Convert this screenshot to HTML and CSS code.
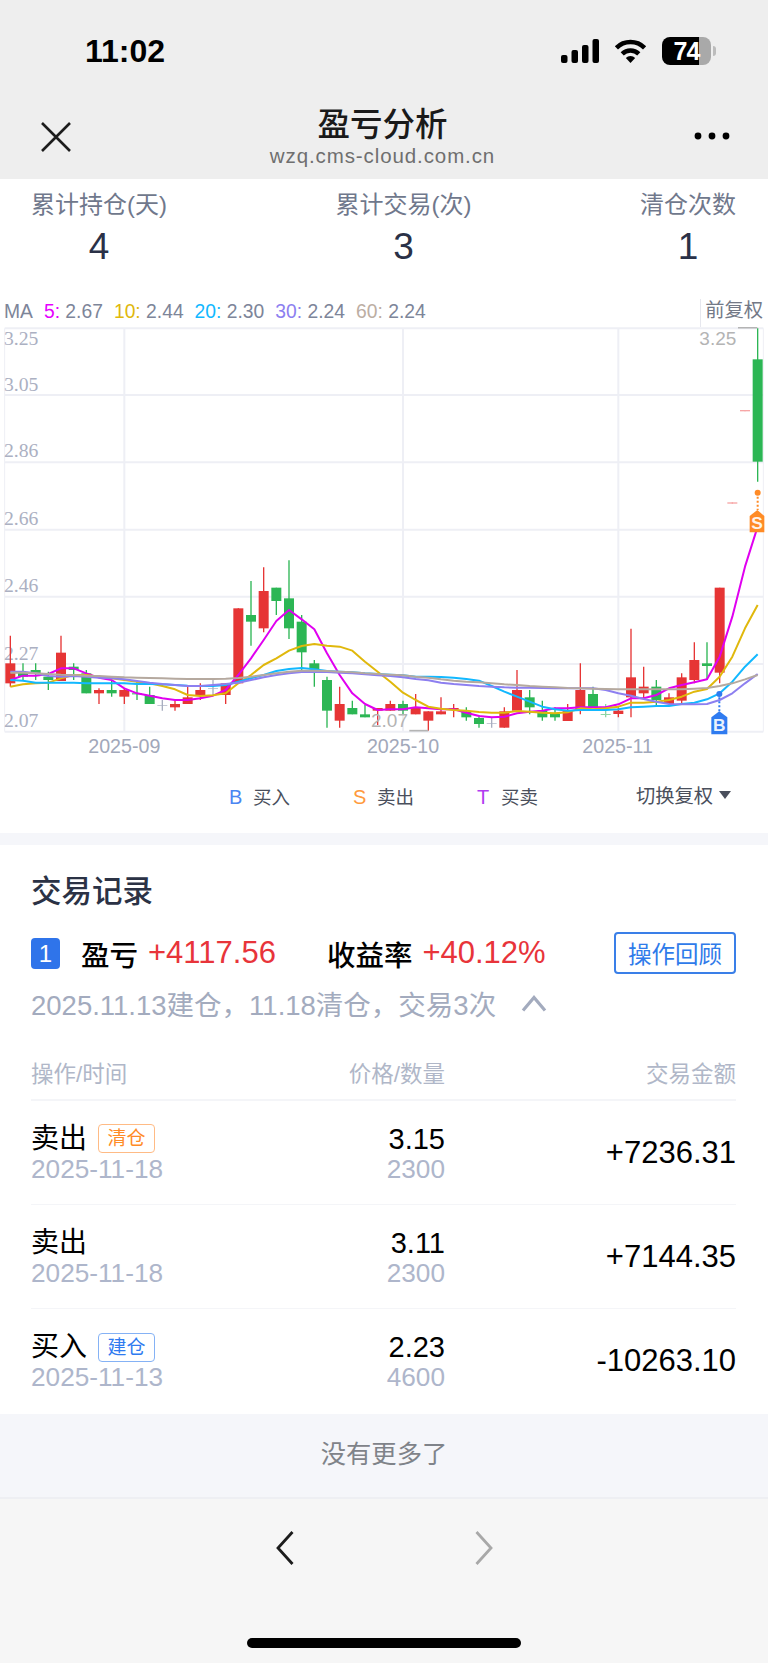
FILE: index.html
```html
<!DOCTYPE html>
<html>
<head>
    <title>盈亏分析</title>
    <meta charset="utf-8">
    <link rel="stylesheet" href="styles.css">
</head>
<body>
    <header class="top">
        <div class="status">
            <span class="time">11:02</span>
            <div class="status-icons">
                <svg class="signal" width="38" height="24" viewBox="0 0 38 24">
                    <rect x="0" y="16" width="6.5" height="8" rx="2"/>
                    <rect x="10.5" y="11" width="6.5" height="13" rx="2"/>
                    <rect x="21" y="6" width="6.5" height="18" rx="2"/>
                    <rect x="31.5" y="0" width="6.5" height="24" rx="2"/>
                </svg>
                <svg class="wifi" width="33" height="24" viewBox="0 0 33 24">
                    <path d="M2.4 8.9A20 20 0 0 1 30.6 8.9M8.2 14.8A12 12 0 0 1 24.8 14.8" fill="none" stroke="#000" stroke-width="4.5"/>
                    <path d="M16.5 24L11.8 19A6.6 6.6 0 0 1 21.2 19Z"/>
                </svg>
                <div class="battery">74</div>
            </div>
        </div>
        <div class="nav">
            <svg width="30" height="30" viewBox="0 0 30 30">
                <path d="M1 1L29 29M29 1L1 29" stroke="#1c1c1c" stroke-width="2.6" fill="none"/>
            </svg>
            <div class="nav-title">
                <h1>盈亏分析</h1>
                <div class="nav-url">wzq.cms-cloud.com.cn</div>
            </div>
            <svg width="36" height="8" viewBox="0 0 36 8">
                <circle cx="4" cy="4" r="3.4"/>
                <circle cx="18" cy="4" r="3.4"/>
                <circle cx="32" cy="4" r="3.4"/>
            </svg>
        </div>
    </header>

    <section class="stats">
        <div class="stat"><div class="stat-label">累计持仓(天)</div><div class="stat-value">4</div></div>
        <div class="stat"><div class="stat-label">累计交易(次)</div><div class="stat-value">3</div></div>
        <div class="stat"><div class="stat-label">清仓次数</div><div class="stat-value">1</div></div>
    </section>

    <div class="ma-row">
        <span class="ma-name">MA</span>
        <span class="ma-item"><b class="c5">5:</b> 2.67</span>
        <span class="ma-item"><b class="c10">10:</b> 2.44</span>
        <span class="ma-item"><b class="c20">20:</b> 2.30</span>
        <span class="ma-item"><b class="c30">30:</b> 2.24</span>
        <span class="ma-item"><b class="c60">60:</b> 2.24</span>
        <span class="fq">前复权</span>
    </div>

    <svg id="chart" class="chart" width="768" height="433" viewBox="0 81 2304 1299">
        <g id="grid"></g>
        <g class="y-labels">
            <text x="12" y="135">3.25</text>
            <text x="12" y="272">3.05</text>
            <text x="12" y="472">2.86</text>
            <text x="12" y="675">2.66</text>
            <text x="12" y="877">2.46</text>
            <text x="12" y="1080">2.27</text>
            <text x="12" y="1282">2.07</text>
        </g>
        <g id="candles"></g>
        <g id="lines"></g>
        <g class="x-labels">
            <text x="373" y="1358">2025-09</text>
            <text x="1209" y="1358">2025-10</text>
            <text x="1853" y="1358">2025-11</text>
        </g>
        <g class="extreme">
            <text x="2098" y="135">3.25</text>
            <path d="M2214 83H2272"/>
            <text x="1113" y="1282">2.07</text>
            <path d="M1228 1292H1285"/>
        </g>
        <g class="pin-b">
            <circle cx="2158" cy="1182" r="9"/>
            <path class="pin-dots" d="M2158 1192V1236"/>
            <path d="M2158 1234L2182 1252V1303H2134V1252Z"/>
            <text x="2158" y="1292">B</text>
        </g>
        <g class="pin-s">
            <circle cx="2273" cy="578" r="9"/>
            <path class="pin-dots" d="M2273 590V630"/>
            <path d="M2272 630L2293 648V697H2249V648Z"/>
            <text x="2271" y="686">S</text>
        </g>
    </svg>

    <div class="marks">
        <span class="mark"><i class="m-b">B</i>买入</span>
        <span class="mark"><i class="m-s">S</i>卖出</span>
        <span class="mark"><i class="m-t">T</i>买卖</span>
        <span class="switch">切换复权<em></em></span>
    </div>

    <div class="band"></div>

    <section class="records">
        <h2>交易记录</h2>
        <div class="summary">
            <span class="num-badge">1</span>
            <span class="sum-name">盈亏</span>
            <span class="sum-val">+4117.56</span>
            <span class="sum-name rate">收益率</span>
            <span class="sum-val">+40.12%</span>
            <button class="review">操作回顾</button>
        </div>
        <div class="sub">
            <span>2025.11.13建仓，11.18清仓，交易3次</span>
            <svg width="26" height="17" viewBox="0 0 26 17">
                <path d="M2 15.5L13 2.5L24 15.5" fill="none" stroke="#a3abbe" stroke-width="3.2"/>
            </svg>
        </div>

        <div class="row head">
            <div>操作/时间</div>
            <div class="right">价格/数量</div>
            <div class="right">交易金额</div>
        </div>
        <div class="row">
            <div>
                <div class="op">卖出<span class="tag orange">清仓</span></div>
                <div class="minor">2025-11-18</div>
            </div>
            <div class="right">
                <div class="price">3.15</div>
                <div class="minor">2300</div>
            </div>
            <div class="right amount">+7236.31</div>
        </div>
        <div class="row">
            <div>
                <div class="op">卖出</div>
                <div class="minor">2025-11-18</div>
            </div>
            <div class="right">
                <div class="price">3.11</div>
                <div class="minor">2300</div>
            </div>
            <div class="right amount">+7144.35</div>
        </div>
        <div class="row last">
            <div>
                <div class="op">买入<span class="tag blue">建仓</span></div>
                <div class="minor">2025-11-13</div>
            </div>
            <div class="right">
                <div class="price">2.23</div>
                <div class="minor">4600</div>
            </div>
            <div class="right amount">-10263.10</div>
        </div>
    </section>

    <div class="no-more">没有更多了</div>

    <footer class="toolbar">
        <div class="arrows">
            <svg width="18" height="34" viewBox="0 0 18 34">
                <path d="M16.5 1L2 17L16.5 33" fill="none" stroke="#1c1c1c" stroke-width="2.8"/>
            </svg>
            <svg width="18" height="34" viewBox="0 0 18 34">
                <path d="M1.5 1L16 17L1.5 33" fill="none" stroke="#a8a8a8" stroke-width="2.8"/>
            </svg>
        </div>
        <div class="home-bar"></div>
    </footer>

    <script src="chart.js"></script>
</body>
</html>
```

FILE: styles.css
```css
* {
    box-sizing: border-box;
}

body {
    margin: 0;
    width: 768px;
    height: 1663px;
    overflow: hidden;
    background: #fff;
    font-family: "Liberation Sans", "Noto Sans CJK SC", sans-serif;
    color: #000;
}

h1, h2 {
    margin: 0;
    font-weight: 500;
}

/* top bar */
.top {
    height: 179px;
    background: #eeeeee;
}

.status {
    height: 100px;
    padding: 37px 57px 0 85px;
    display: flex;
    justify-content: space-between;
    align-items: flex-start;
}

.time {
    font-size: 32px;
    line-height: 28px;
    font-weight: 700;
}

.status-icons {
    display: flex;
    align-items: center;
    height: 28px;
    gap: 15px;
}

.battery {
    position: relative;
    width: 49px;
    height: 28px;
    border-radius: 8px;
    background: linear-gradient(90deg, #000 76%, #a9a9a9 76%);
    color: #fff;
    font-size: 25px;
    line-height: 28px;
    font-weight: 700;
    text-align: center;
    letter-spacing: -1px;
}

.battery::after {
    content: "";
    position: absolute;
    right: -5px;
    top: 9px;
    width: 3px;
    height: 10px;
    border-radius: 0 3px 3px 0;
    background: #bcbcbc;
}

.nav {
    height: 79px;
    padding: 0 38px 0 41px;
    display: flex;
    justify-content: space-between;
    align-items: center;
}

.nav svg:first-child {
    margin-top: -6px;
}

.nav svg:last-child {
    margin-top: -8px;
}

.nav-title {
    text-align: center;
    margin-top: -6px;
}

.nav-title h1 {
    font-size: 32.5px;
    line-height: 38px;
    color: #1a1a1a;
}

.nav-url {
    font-size: 20.5px;
    line-height: 24px;
    color: #6f6f6f;
    letter-spacing: 0.9px;
}

/* stats */
.stats {
    height: 120px;
    padding: 11px 32px 0 31px;
    display: flex;
    justify-content: space-between;
}

.stat {
    text-align: center;
}

.stat-label {
    font-size: 24px;
    line-height: 30px;
    color: #70788c;
}

.stat-value {
    margin-top: 6px;
    font-size: 37px;
    line-height: 42px;
    color: #2a3147;
}

/* MA legend */
.ma-row {
    height: 28px;
    padding: 0 0 3px 4px;
    display: flex;
    align-items: center;
    font-size: 19.3px;
    color: #7d8599;
}

.ma-name {
    margin-right: 11px;
}

.ma-item {
    margin-right: 11px;
    white-space: nowrap;
}

.ma-item b {
    font-weight: 400;
}

.c5 { color: #e600ff; }
.c10 { color: #e0b80c; }
.c20 { color: #12b8ff; }
.c30 { color: #8d7ff0; }
.c60 { color: #bcaea3; }

.fq {
    margin-left: auto;
    margin-right: 5px;
    padding-left: 4px;
    height: 28px;
    margin-bottom: -3px;
    line-height: 24px;
    border-left: 1px solid #e6e7ee;
    color: #737987;
}

/* chart */
.chart {
    display: block;
}

.y-labels text {
    font-family: "Liberation Serif", serif;
    font-size: 59px;
    fill: #abb0c2;
}

.x-labels text {
    font-size: 59px;
    fill: #a2a8ba;
    text-anchor: middle;
}

.extreme text {
    font-size: 57px;
    fill: #b4b4b4;
}

.extreme path {
    stroke: #b4b4b4;
    stroke-width: 5;
}

.pin-b circle, .pin-b path {
    fill: #2f7bf0;
}

.pin-s circle, .pin-s path {
    fill: #ff8b26;
}

.chart path.pin-dots {
    fill: none;
    stroke-width: 6;
    stroke-dasharray: 6 6;
}

.pin-b .pin-dots {
    stroke: #2f7bf0;
}

.pin-s .pin-dots {
    stroke: #ff8b26;
}

.pin-b text, .pin-s text {
    fill: #fff;
    font-size: 52px;
    font-weight: 700;
    text-anchor: middle;
    opacity: 0.9;
}

/* buy/sell marks */
.marks {
    height: 73px;
    padding: 0 37px 2px 229px;
    display: flex;
    align-items: center;
    gap: 63px;
    font-size: 18.5px;
    color: #4a4f5c;
}

.mark i {
    display: inline-block;
    width: 15px;
    margin-right: 9px;
    font-style: normal;
    font-size: 20px;
}

.m-b { color: #4b86f2; }
.m-s { color: #ff9a3d; }
.m-t { color: #b03cf0; }

.switch {
    margin-left: auto;
    font-size: 19.3px;
    display: flex;
    align-items: center;
    margin-top: -2px;
}

.switch em {
    margin-left: 6px;
    width: 0;
    height: 0;
    border-left: 6px solid transparent;
    border-right: 6px solid transparent;
    border-top: 8px solid #4a4f5c;
}

.band {
    height: 12px;
    background: #f5f6fa;
}

/* records */
.records {
    height: 569px;
    padding: 30px 32px 0 31px;
}

.records h2 {
    font-size: 30.5px;
    line-height: 32px;
    color: #2b3245;
}

.summary {
    margin-top: 25px;
    height: 42px;
    display: flex;
    align-items: center;
}

.num-badge {
    width: 29px;
    height: 31px;
    border-radius: 4px;
    background: #2f74ea;
    color: #fff;
    font-size: 24px;
    line-height: 31px;
    text-align: center;
    margin-right: 21px;
}

.sum-name {
    font-size: 28.5px;
    font-weight: 500;
    margin-right: 10px;
}

.rate {
    margin-left: 51px;
}

.sum-val {
    font-size: 31px;
    color: #e8343a;
}

.review {
    margin-left: auto;
    width: 122px;
    height: 42px;
    padding: 0;
    border: 2px solid #3a7fe8;
    border-radius: 4px;
    background: #fff;
    color: #2f7bea;
    font-family: inherit;
    font-size: 23.5px;
}

.sub {
    margin-top: 14px;
    height: 30px;
    display: flex;
    align-items: center;
    gap: 25px;
    font-size: 27.5px;
    color: #a3abbe;
    white-space: nowrap;
}

.row {
    display: grid;
    grid-template-columns: 270px 144px 1fr;
    align-items: center;
    height: 104px;
    border-bottom: 1px solid #f4f5f8;
}

.row.last {
    border-bottom: none;
}

.row.head {
    margin-top: 43px;
    height: 40px;
    align-items: start;
    font-size: 22.5px;
    line-height: 28px;
    color: #b0b7c8;
    border-bottom: 2px solid #f4f5f8;
}

.right {
    text-align: right;
}

.op {
    display: flex;
    align-items: center;
    font-size: 28px;
    line-height: 32px;
}

.tag {
    margin-left: 11px;
    width: 57px;
    height: 29px;
    border: 1px solid;
    border-radius: 4px;
    font-size: 19px;
    line-height: 27px;
    text-align: center;
}

.tag.orange {
    color: #ff8b26;
    border-color: #ffbb85;
}

.tag.blue {
    color: #2f7bf0;
    border-color: #85b2f5;
}

.minor {
    font-size: 26.2px;
    line-height: 28px;
    color: #aeb6cb;
}

.price {
    font-size: 29px;
    line-height: 32px;
}

.amount {
    font-size: 31px;
}

/* bottom */
.no-more {
    height: 85px;
    background: #f5f6fa;
    border-bottom: 2px solid #eeeff3;
    text-align: center;
    font-size: 25.3px;
    line-height: 80px;
    color: #7f8389;
}

.toolbar {
    height: 165px;
    padding-top: 32px;
    background: #f6f6f6;
}

.arrows {
    display: flex;
    justify-content: center;
    gap: 181px;
}

.home-bar {
    margin: 73px auto 0;
    width: 274px;
    height: 10px;
    border-radius: 5px;
    background: #000;
}
```

FILE: chart.js
```js
// chart coordinates are 3x the page pixels, see the viewBox on #chart
const NS = 'http://www.w3.org/2000/svg';
const RED = '#e63535';
const GREEN = '#2cb654';
const GRAY = '#a8aec0';
const PINK = '#f7a6a6';

function add(parent, tag, attrs) {
    const el = document.createElementNS(NS, tag);
    Object.keys(attrs).forEach(k => el.setAttribute(k, attrs[k]));
    parent.appendChild(el);
    return el;
}

function xOf(i) {
    return 31 + i * 38;
}

// grid
const grid = document.getElementById('grid');
[85, 285, 487, 689, 890, 1092, 1295].forEach(y => {
    add(grid, 'line', { x1: 14, x2: 2290, y1: y, y2: y, stroke: '#eeeff5', 'stroke-width': 6 });
});
[14, 373, 1209, 1855, 2290].forEach(x => {
    add(grid, 'line', { x1: x, x2: x, y1: 85, y2: 1295, stroke: '#eeeff5', 'stroke-width': x === 14 || x === 2290 ? 3 : 6 });
});

// [body top, body bottom, wick top, wick bottom, color]
const candles = [
    [1090, 1150, 1007, 1160, RED],
    [1118, 1130, 1090, 1140, GREEN],
    [1110, 1122, 1090, 1140, GREEN],
    [1130, 1140, 1115, 1170, GREEN],
    [1058, 1143, 1007, 1143, RED],
    [1100, 1110, 1090, 1140, GREEN],
    [1120, 1180, 1110, 1180, GREEN],
    [1170, 1180, 1165, 1212, RED],
    [1170, 1180, 1140, 1190, GREEN],
    [1170, 1190, 1165, 1212, RED],
    [1180, 1183, 1145, 1200, GREEN],
    [1185, 1212, 1160, 1212, GREEN],
    [1215, 1217, 1200, 1232, GRAY],
    [1212, 1222, 1200, 1232, RED],
    [1192, 1212, 1160, 1212, RED],
    [1170, 1187, 1150, 1200, RED],
    [1165, 1167, 1138, 1185, GRAY],
    [1150, 1185, 1150, 1212, RED],
    [925, 1150, 925, 1150, RED],
    [945, 965, 843, 1037, GREEN],
    [873, 985, 802, 997, RED],
    [863, 903, 863, 945, GREEN],
    [895, 985, 781, 1017, GREEN],
    [965, 1057, 945, 1110, GREEN],
    [1090, 1108, 1080, 1160, GREEN],
    [1140, 1232, 1130, 1283, GREEN],
    [1212, 1262, 1160, 1283, RED],
    [1224, 1243, 1202, 1243, GREEN],
    [1243, 1252, 1215, 1252, GREEN],
    [1224, 1232, 1224, 1275, RED],
    [1212, 1232, 1202, 1232, RED],
    [1212, 1232, 1202, 1245, GREEN],
    [1224, 1243, 1182, 1243, RED],
    [1234, 1262, 1234, 1292, RED],
    [1234, 1243, 1192, 1243, RED],
    [1224, 1228, 1212, 1252, RED],
    [1234, 1252, 1222, 1262, GREEN],
    [1254, 1272, 1245, 1283, GREEN],
    [1270, 1272, 1252, 1283, GRAY],
    [1234, 1283, 1222, 1283, RED],
    [1170, 1232, 1110, 1232, RED],
    [1192, 1222, 1170, 1243, GREEN],
    [1232, 1252, 1202, 1262, GREEN],
    [1242, 1252, 1222, 1262, GREEN],
    [1232, 1263, 1212, 1263, RED],
    [1170, 1232, 1090, 1243, RED],
    [1182, 1222, 1160, 1222, GREEN],
    [1242, 1245, 1212, 1252, '#8fd6a4'],
    [1232, 1242, 1222, 1252, RED],
    [1132, 1192, 986, 1252, RED],
    [1160, 1180, 1100, 1195, RED],
    [1160, 1200, 1140, 1218, GREEN],
    [1192, 1212, 1180, 1212, RED],
    [1132, 1202, 1120, 1210, RED],
    [1080, 1140, 1027, 1150, RED],
    [1090, 1098, 1027, 1140, GREEN],
    [863, 1118, 863, 1150, RED],
    [607, 611, 607, 611, PINK],
    [330, 334, 330, 334, PINK],
    [178, 485, 85, 545, GREEN]
];

const candleGroup = document.getElementById('candles');
candles.forEach((c, i) => {
    const x = xOf(i);
    add(candleGroup, 'line', { x1: x, x2: x, y1: c[2], y2: c[3], stroke: c[4], 'stroke-width': 4 });
    add(candleGroup, 'rect', { x: x - 15, y: c[0], width: 30, height: c[1] - c[0], fill: c[4] });
});

// moving averages, one y per candle
const averages = [
    ['#e000f0', [1140, 1127, 1127, 1122, 1105, 1105, 1120, 1133, 1140, 1165, 1180, 1187, 1195, 1200, 1200, 1195, 1187, 1170, 1125, 1075, 1020, 963, 930, 958, 988, 1060, 1125, 1180, 1212, 1230, 1228, 1228, 1222, 1225, 1228, 1228, 1238, 1248, 1252, 1250, 1240, 1235, 1232, 1225, 1225, 1222, 1222, 1222, 1213, 1195, 1195, 1185, 1165, 1155, 1147, 1138, 1070, 950, 800, 680]],
    ['#e0b80c', [1160, 1153, 1150, 1148, 1135, 1125, 1125, 1130, 1135, 1140, 1145, 1150, 1158, 1168, 1185, 1188, 1186, 1180, 1150, 1125, 1095, 1075, 1052, 1038, 1032, 1037, 1040, 1052, 1085, 1115, 1145, 1178, 1200, 1220, 1226, 1230, 1232, 1236, 1238, 1238, 1233, 1235, 1238, 1240, 1237, 1225, 1228, 1225, 1220, 1208, 1208, 1205, 1200, 1190, 1175, 1167, 1130, 1070, 985, 915]],
    ['#12b8ff', [1140, 1142, 1148, 1148, 1148, 1148, 1150, 1150, 1150, 1150, 1152, 1152, 1153, 1155, 1157, 1158, 1158, 1155, 1145, 1135, 1125, 1113, 1107, 1104, 1108, 1113, 1115, 1117, 1120, 1122, 1124, 1126, 1130, 1130, 1131, 1133, 1137, 1142, 1158, 1175, 1190, 1205, 1220, 1228, 1232, 1230, 1230, 1230, 1228, 1222, 1220, 1218, 1218, 1212, 1208, 1198, 1180, 1145, 1100, 1063]],
    ['#8d7ff0', [1115, 1115, 1120, 1128, 1130, 1128, 1130, 1133, 1135, 1138, 1143, 1148, 1152, 1155, 1158, 1158, 1155, 1152, 1148, 1140, 1132, 1125, 1120, 1116, 1115, 1116, 1118, 1120, 1123, 1126, 1128, 1132, 1137, 1141, 1148, 1152, 1155, 1158, 1160, 1162, 1163, 1163, 1164, 1165, 1165, 1165, 1165, 1170, 1180, 1187, 1197, 1205, 1212, 1213, 1213, 1212, 1200, 1180, 1150, 1122]],
    ['#b5a99f', [1118, 1118, 1120, 1122, 1124, 1125, 1127, 1128, 1130, 1132, 1133, 1134, 1135, 1136, 1137, 1137, 1137, 1136, 1134, 1130, 1125, 1120, 1115, 1112, 1112, 1113, 1115, 1117, 1120, 1122, 1124, 1126, 1130, 1133, 1138, 1142, 1145, 1147, 1150, 1153, 1155, 1158, 1160, 1162, 1164, 1165, 1166, 1167, 1168, 1168, 1168, 1168, 1168, 1168, 1166, 1164, 1158, 1150, 1138, 1125]]
];

const lines = document.getElementById('lines');
averages.forEach(ma => {
    add(lines, 'polyline', {
        points: ma[1].map((y, i) => xOf(i) + ',' + y).join(' '),
        fill: 'none',
        stroke: ma[0],
        'stroke-width': 6,
        'stroke-linejoin': 'round'
    });
});
```
